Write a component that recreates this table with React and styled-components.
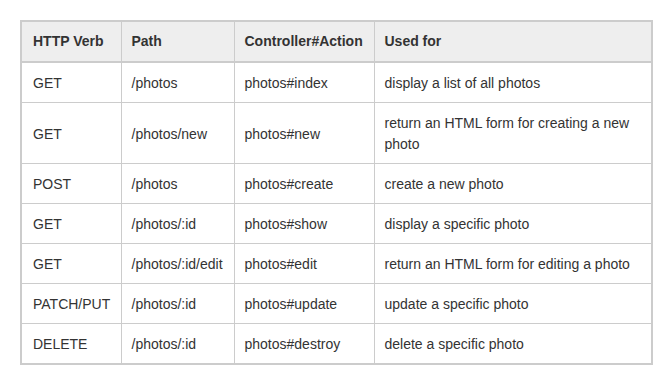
import React from "react";
import styled, { createGlobalStyle } from "styled-components";

const Global = createGlobalStyle`
  html, body {
    margin: 0;
    padding: 0;
    background: #ffffff;
  }
  body {
    font-family: "Liberation Sans", Arial, Helvetica, sans-serif;
    color: #333333;
  }
`;

const Page = styled.div`
  padding: 20px 0 0 20px;
`;

const Table = styled.table`
  border-collapse: collapse;
  table-layout: fixed;
  width: 631px;
  border: 2px solid #cccccc;
  font-size: 14px;
  line-height: 21px;
  color: #333333;
`;

const HeadCell = styled.th`
  background: #eeeeee;
  font-weight: bold;
  text-align: left;
  padding: 9px 10px 9px 10px;
  border: 1px solid #cccccc;
  border-bottom: 2px solid #cccccc;
  vertical-align: middle;
  &:first-child {
    padding-left: 11px;
  }
`;

const Cell = styled.td`
  padding: 10px 10px 8px 10px;
  border: 1px solid #cccccc;
  vertical-align: middle;
  &:first-child {
    padding-left: 11px;
  }
`;

const columns = [
  { title: "HTTP Verb", width: 100 },
  { title: "Path", width: 113 },
  { title: "Controller#Action", width: 140 },
  { title: "Used for", width: 278 },
];

const rows = [
  ["GET", "/photos", "photos#index", "display a list of all photos"],
  ["GET", "/photos/new", "photos#new", "return an HTML form for creating a new photo"],
  ["POST", "/photos", "photos#create", "create a new photo"],
  ["GET", "/photos/:id", "photos#show", "display a specific photo"],
  ["GET", "/photos/:id/edit", "photos#edit", "return an HTML form for editing a photo"],
  ["PATCH/PUT", "/photos/:id", "photos#update", "update a specific photo"],
  ["DELETE", "/photos/:id", "photos#destroy", "delete a specific photo"],
];

export default function App() {
  return (
    <Page>
      <Global />
      <Table>
        <colgroup>
          {columns.map((c) => (
            <col key={c.title} style={{ width: c.width }} />
          ))}
        </colgroup>
        <thead>
          <tr>
            {columns.map((c) => (
              <HeadCell key={c.title}>{c.title}</HeadCell>
            ))}
          </tr>
        </thead>
        <tbody>
          {rows.map((r, i) => (
            <tr key={i}>
              {r.map((v, j) => (
                <Cell key={j}>{v}</Cell>
              ))}
            </tr>
          ))}
        </tbody>
      </Table>
    </Page>
  );
}
